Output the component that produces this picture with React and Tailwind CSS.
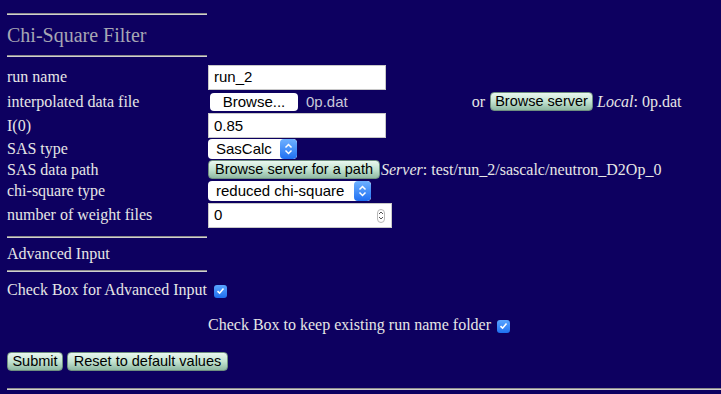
import React from "react";

const serif = { fontFamily: '"Liberation Serif", "Times New Roman", serif' };
const sans = { fontFamily: '"Liberation Sans", Arial, sans-serif' };

const Rule = ({ className = "" }) => (
  <div className={`h-[2px] border-t border-[#8c8c8c] border-b border-b-[#d0d0d0] ${className}`}></div>
);

const GreenButton = ({ children, className = "" }) => (
  <span
    className={`inline-flex items-center justify-center whitespace-nowrap h-[19px] rounded-[4px] border border-[#6f8f80] bg-gradient-to-b from-[#e9f7ef] via-[#c3e3d1] to-[#8fb9a3] text-black text-[14.5px] leading-none ${className}`}
    style={sans}
  >
    {children}
  </span>
);

const SelectBox = ({ label, width }) => (
  <span
    className={`inline-flex items-stretch h-[20px] rounded-[4px] bg-white overflow-hidden ${width}`}
    style={sans}
  >
    <span className="flex-1 flex items-center pl-[8px] text-[15px] text-black whitespace-nowrap">{label}</span>
    <span className="w-[17px] flex items-center justify-center rounded-[4px] bg-gradient-to-b from-[#6eb1ff] to-[#1e6ff2]">
      <svg width="9" height="12" viewBox="0 0 9 12" fill="none" stroke="white" strokeWidth="1.5">
        <path d="M1.5 4.5 L4.5 1.5 L7.5 4.5" />
        <path d="M1.5 7.5 L4.5 10.5 L7.5 7.5" />
      </svg>
    </span>
  </span>
);

const Check = () => (
  <span className="inline-flex items-center justify-center w-[13px] h-[13px] rounded-[3px] bg-gradient-to-b from-[#5aa5ff] to-[#1d6ff0]">
    <svg width="9" height="8" viewBox="0 0 9 8" fill="none" stroke="white" strokeWidth="1.6">
      <path d="M1.5 4.2 L3.6 6.2 L7.5 1.5" />
    </svg>
  </span>
);

const Row = ({ label, h, children }) => (
  <div className={`flex items-center ${h}`}>
    <div className="w-[201px] shrink-0">{label}</div>
    <div className="flex items-center whitespace-nowrap">{children}</div>
  </div>
);

export default function App() {
  return (
    <div className="w-[721px] h-[394px] overflow-hidden bg-[#0d0060] text-[#e6e6e6] text-[16px] leading-[18px]" style={serif}>
      <div className="pl-[7px]">
        <div className="pt-[13px]">
          <Rule className="w-[200px]" />
        </div>
        <div className="h-[40px] flex items-center text-[20px] text-[#a6a6b4]">Chi-Square Filter</div>
        <Rule className="w-[200px]" />

        <div className="pt-[7px]">
          <Row label="run name" h="h-[26px]">
            <span className="inline-flex items-center w-[178px] h-[25px] bg-white border border-[#c8c8c8] pl-[5px] text-[15px] text-black" style={sans}>
              run_2
            </span>
          </Row>
          <Row label="interpolated data file" h="h-[23px]">
            <span className="inline-flex items-center justify-center ml-[2px] w-[88px] h-[18px] rounded-[4px] bg-white text-[15px] text-black" style={sans}>
              Browse...
            </span>
            <span className="ml-[8px] text-[15px] text-[#c8c8d8]" style={sans}>0p.dat</span>
            <span className="ml-[124px]">or</span>
            <GreenButton className="ml-[5px] w-[103px]">Browse server</GreenButton>
            <span className="ml-[4px]"><i>Local</i>: 0p.dat</span>
          </Row>
          <Row label="I(0)" h="h-[25px]">
            <span className="inline-flex items-center w-[178px] h-[25px] bg-white border border-[#c8c8c8] pl-[5px] text-[15px] text-black" style={sans}>
              0.85
            </span>
          </Row>
          <Row label="SAS type" h="h-[21px]">
            <SelectBox label="SasCalc" width="w-[89px]" />
          </Row>
          <Row label="SAS data path" h="h-[21px]">
            <GreenButton className="w-[172px]">Browse server for a path</GreenButton>
            <span className="ml-[1px]"><i>Server</i>: test/run_2/sascalc/neutron_D2Op_0</span>
          </Row>
          <Row label="chi-square type" h="h-[22px]">
            <SelectBox label="reduced chi-square" width="w-[163px]" />
          </Row>
          <Row label="number of weight files" h="h-[26px]">
            <span className="relative inline-flex items-center w-[184px] h-[25px] bg-white border border-[#c8c8c8] pl-[5px] text-[15px] text-black" style={sans}>
              0
              <span className="absolute right-[6px] top-[5px] w-[8px] h-[14px] rounded-full border border-[#b8b8b8] flex flex-col items-center justify-center gap-[1px]">
                <svg width="6" height="4" viewBox="0 0 6 4" fill="none" stroke="#555" strokeWidth="1">
                  <path d="M1 3 L3 1 L5 3" />
                </svg>
                <svg width="6" height="4" viewBox="0 0 6 4" fill="none" stroke="#555" strokeWidth="1">
                  <path d="M1 1 L3 3 L5 1" />
                </svg>
              </span>
            </span>
          </Row>
        </div>

        <div className="pt-[8px]">
          <Rule className="w-[200px]" />
        </div>
        <div className="h-[32px] flex items-center">Advanced Input</div>
        <Rule className="w-[200px]" />

        <div className="h-[36px] flex items-center">
          <span>Check Box for Advanced Input</span>
          <span className="ml-[7px]"><Check /></span>
        </div>

        <div className="h-[34px] flex items-center pl-[201px]">
          <span>Check Box to keep existing run name folder</span>
          <span className="ml-[6px]"><Check /></span>
        </div>

        <div className="pt-[10px] flex items-center gap-[4px]">
          <GreenButton className="w-[56px]">Submit</GreenButton>
          <GreenButton className="w-[161px]">Reset to default values</GreenButton>
        </div>

        <div className="pt-[17px]">
          <Rule className="w-full" />
        </div>
      </div>
    </div>
  );
}
